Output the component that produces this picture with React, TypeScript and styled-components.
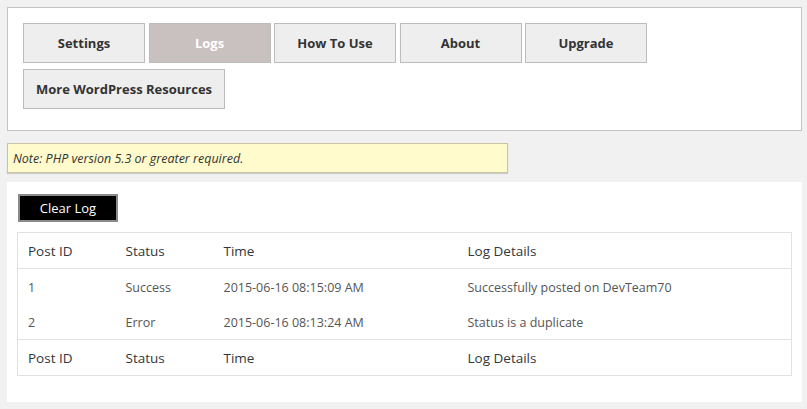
import React from "react";
import styled, { createGlobalStyle } from "styled-components";

const Global = createGlobalStyle`
  html, body { margin: 0; padding: 0; background: #f1f1f1; }
  body { font-family: "Open Sans", "Liberation Sans", sans-serif; color: #444; }
  * { box-sizing: border-box; }
`;

const Page = styled.div`
  padding: 7px 5px 7px 7px;
  display: flex;
  flex-direction: column;
`;

const NavPanel = styled.div`
  background: #fff;
  border: 1px solid #c3c3c3;
  padding: 15px 15px 21px 15px;
  display: flex;
  flex-wrap: wrap;
  column-gap: 3.5px;
  row-gap: 6px;
`;

const NavButton = styled.button<{ $active?: boolean; $wide?: boolean }>`
  width: ${(p) => (p.$wide ? "202px" : "122px")};
  height: 40px;
  padding: 0;
  border: 1px solid #bcbcbc;
  background: ${(p) => (p.$active ? "#c9c0c0" : "#eeeeee")};
  color: ${(p) => (p.$active ? "#fff" : "#333")};
  font-family: inherit;
  font-weight: 700;
  font-size: 13px;
  cursor: pointer;
  white-space: nowrap;
`;

const Note = styled.div`
  margin-top: 12px;
  width: 501px;
  height: 30px;
  background: #fffbcc;
  border: 1px solid #c9c4a3;
  box-shadow: 0 1px 1px rgba(0, 0, 0, 0.15);
  padding: 0 5px;
  display: flex;
  align-items: center;
  font-style: italic;
  font-size: 12.5px;
  color: #333;
`;

const LogPanel = styled.div`
  margin-top: 9px;
  background: #fff;
  padding: 12px 10px 26px 10px;
`;

const ClearButton = styled.button`
  margin-left: 1px;
  width: 100px;
  height: 28px;
  background: #000;
  color: #fff;
  border: 2px solid #8a8a8a;
  font-family: inherit;
  font-size: 13px;
  cursor: pointer;
`;

const Table = styled.table`
  margin-top: 10px;
  width: 100%;
  border: 1px solid #e1e1e1;
  border-collapse: collapse;
  table-layout: fixed;
  font-size: 12.5px;
`;

const Th = styled.th<{ $w?: number }>`
  text-align: left;
  font-weight: 400;
  font-size: 13.5px;
  color: #32373c;
  height: 36px;
  padding: 0 10px;
  width: ${(p) => (p.$w ? `${p.$w}px` : "auto")};
`;

const HeadRow = styled.tr`
  border-bottom: 1px solid #e1e1e1;
`;

const FootRow = styled.tr`
  border-top: 1px solid #e1e1e1;
`;

const Td = styled.td`
  color: #555;
  padding: 1px 10px 0 10px;
  height: 35.5px;
`;

const rows = [
  { id: "1", status: "Success", time: "2015-06-16 08:15:09 AM", details: "Successfully posted on DevTeam70" },
  { id: "2", status: "Error", time: "2015-06-16 08:13:24 AM", details: "Status is a duplicate" },
];

const Header = () => (
  <>
    <Th $w={98}>Post ID</Th>
    <Th $w={98}>Status</Th>
    <Th $w={244}>Time</Th>
    <Th>Log Details</Th>
  </>
);

export default function App() {
  return (
    <>
      <Global />
      <Page>
        <NavPanel>
          <NavButton>Settings</NavButton>
          <NavButton $active>Logs</NavButton>
          <NavButton>How To Use</NavButton>
          <NavButton>About</NavButton>
          <NavButton>Upgrade</NavButton>
          <NavButton $wide>More WordPress Resources</NavButton>
        </NavPanel>
        <Note>Note: PHP version 5.3 or greater required.</Note>
        <LogPanel>
          <ClearButton>Clear Log</ClearButton>
          <Table>
            <thead>
              <HeadRow>
                <Header />
              </HeadRow>
            </thead>
            <tbody>
              {rows.map((r) => (
                <tr key={r.id}>
                  <Td>{r.id}</Td>
                  <Td>{r.status}</Td>
                  <Td>{r.time}</Td>
                  <Td>{r.details}</Td>
                </tr>
              ))}
            </tbody>
            <tfoot>
              <FootRow>
                <Header />
              </FootRow>
            </tfoot>
          </Table>
        </LogPanel>
      </Page>
    </>
  );
}
